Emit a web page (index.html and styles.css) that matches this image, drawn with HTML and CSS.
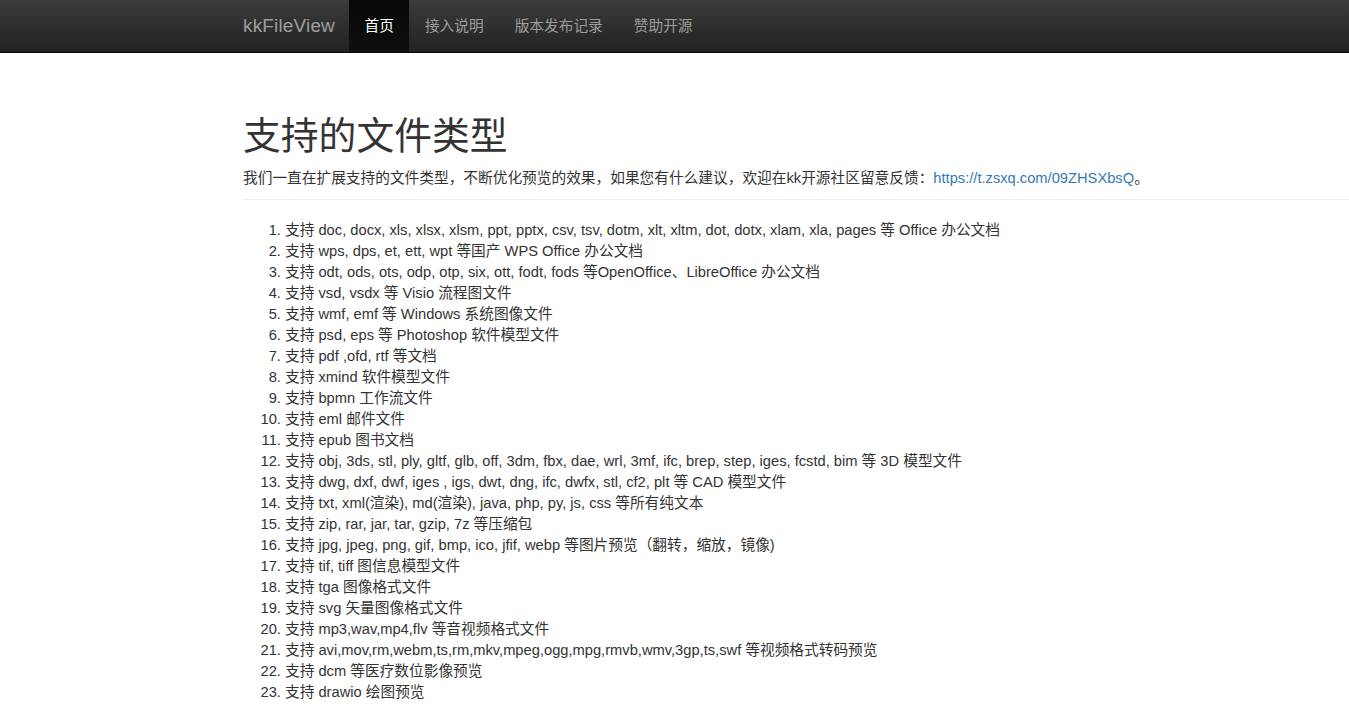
FILE: index.html
```html
<!DOCTYPE html>
<html lang="zh-CN">
<head>
<meta charset="utf-8">
<title>kkFileView</title>
<link rel="stylesheet" href="styles.css">
</head>
<body>
<nav class="navbar">
  <div class="nav-inner">
    <a class="brand" href="#">kkFileView</a>
    <ul class="nav">
      <li class="active"><a href="#">首页</a></li>
      <li><a href="#">接入说明</a></li>
      <li><a href="#">版本发布记录</a></li>
      <li><a href="#">赞助开源</a></li>
    </ul>
  </div>
</nav>
<main class="content">
  <div class="page-header">
    <h1>支持的文件类型</h1>
    <p>我们一直在扩展支持的文件类型，不断优化预览的效果，如果您有什么建议，欢迎在kk开源社区留意反馈：<a href="#">https://t.zsxq.com/09ZHSXbsQ</a>。</p>
  </div>
  <ol class="types">
    <li>支持 doc, docx, xls, xlsx, xlsm, ppt, pptx, csv, tsv, dotm, xlt, xltm, dot, dotx, xlam, xla, pages 等 Office 办公文档</li>
    <li>支持 wps, dps, et, ett, wpt 等国产 WPS Office 办公文档</li>
    <li>支持 odt, ods, ots, odp, otp, six, ott, fodt, fods 等OpenOffice、LibreOffice 办公文档</li>
    <li>支持 vsd, vsdx 等 Visio 流程图文件</li>
    <li>支持 wmf, emf 等 Windows 系统图像文件</li>
    <li>支持 psd, eps 等 Photoshop 软件模型文件</li>
    <li>支持 pdf ,ofd, rtf 等文档</li>
    <li>支持 xmind 软件模型文件</li>
    <li>支持 bpmn 工作流文件</li>
    <li>支持 eml 邮件文件</li>
    <li>支持 epub 图书文档</li>
    <li>支持 obj, 3ds, stl, ply, gltf, glb, off, 3dm, fbx, dae, wrl, 3mf, ifc, brep, step, iges, fcstd, bim 等 3D 模型文件</li>
    <li>支持 dwg, dxf, dwf, iges , igs, dwt, dng, ifc, dwfx, stl, cf2, plt 等 CAD 模型文件</li>
    <li>支持 txt, xml(渲染), md(渲染), java, php, py, js, css 等所有纯文本</li>
    <li>支持 zip, rar, jar, tar, gzip, 7z 等压缩包</li>
    <li>支持 jpg, jpeg, png, gif, bmp, ico, jfif, webp 等图片预览（翻转，缩放，镜像)</li>
    <li>支持 tif, tiff 图信息模型文件</li>
    <li>支持 tga 图像格式文件</li>
    <li>支持 svg 矢量图像格式文件</li>
    <li>支持 mp3,wav,mp4,flv 等音视频格式文件</li>
    <li>支持 avi,mov,rm,webm,ts,rm,mkv,mpeg,ogg,mpg,rmvb,wmv,3gp,ts,swf 等视频格式转码预览</li>
    <li>支持 dcm 等医疗数位影像预览</li>
    <li>支持 drawio 绘图预览</li>
  </ol>
</main>
</body>
</html>
```

FILE: styles.css
```css
html, body {
  margin: 0;
  padding: 0;
}
body {
  font-family: "Liberation Sans", Arial, "Noto Sans CJK SC", sans-serif;
  font-size: 14.7px;
  line-height: 21px;
  color: #333;
  background: #fff;
}
a {
  text-decoration: none;
}
.navbar {
  height: 52px;
  background: linear-gradient(to bottom, #3c3c3c 0%, #222 100%);
  border-bottom: 1px solid #080808;
}
.nav-inner {
  display: flex;
  height: 52px;
  padding-left: 228px;
}
.brand {
  display: block;
  padding: 0 15px;
  width: 91px;
  font-size: 18.9px;
  line-height: 52px;
  color: #9d9d9d;
  letter-spacing: 0.2px;
}
.nav {
  display: flex;
  list-style: none;
  margin: 0;
  padding: 0;
}
.nav li a {
  display: block;
  padding: 0 15.5px;
  line-height: 52px;
  color: #9d9d9d;
  font-size: 14.7px;
}
.nav li.active a {
  color: #fff;
  background: linear-gradient(to bottom, #080808 0%, #0f0f0f 100%);
}
.content {
  padding-left: 243px;
}
.page-header {
  margin-top: 62px;
  border-bottom: 1px solid #eee;
  padding-bottom: 10px;
}
.page-header h1 {
  margin: 0 0 11px;
  font-size: 37.8px;
  line-height: 42px;
  font-weight: 400;
  color: #333;
}
.page-header p {
  margin: 0;
}
.page-header a {
  color: #337ab7;
}
.types {
  margin: 20px 0 0;
  padding-left: 42px;
}
```
